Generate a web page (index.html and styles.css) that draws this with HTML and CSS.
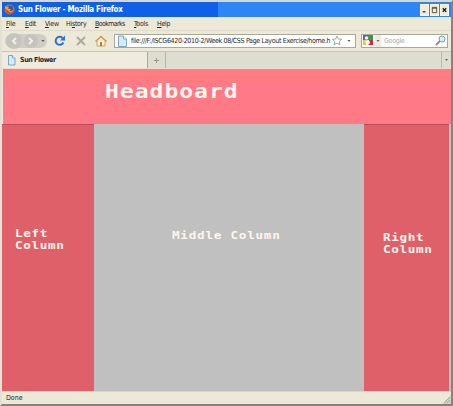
FILE: index.html
```html
<!DOCTYPE html>
<html lang="en">
<head>
<meta charset="utf-8">
<title>Sun Flower</title>
<link rel="stylesheet" href="styles.css">
</head>
<body>
<div class="window">
  <div class="titlebar">
    <svg class="fox" width="11" height="11" viewBox="0 0 11 11"><circle cx="5.5" cy="5.5" r="5" fill="#e66a16"/><circle cx="6" cy="4.5" r="3" fill="#3457a5"/><path d="M1 2l2 1 2-.5-1 2 3 1-2 2 4-1c-1 4-7 4-8-.5z" fill="#f7a32a"/><path d="M.8 4c0 7 8 8 9.500 2-2 3-5 3-6 1z" fill="#d94b13"/></svg>
    <span class="caption">Sun Flower - Mozilla Firefox</span>
    <div class="controls">
      <svg width="8" height="11" viewBox="0 0 8 11"><path d="M2 7.500h3" stroke="#342b28" stroke-width="1.500"/></svg>
      <svg width="8" height="11" viewBox="0 0 8 11"><path d="M1.500 2.500h5v6h-5zM1.500 3.500h5" fill="none" stroke="#54462f"/></svg>
      <svg width="8" height="11" viewBox="0 0 8 11"><path d="M2 3.500l4 4m0-4l-4 4" stroke="#201515" stroke-width="1.500"/></svg>
    </div>
  </div>
  <div class="menu">
    <span class="m-file"><u>F</u>ile</span><span class="m-edit"><u>E</u>dit</span><span class="m-view"><u>V</u>iew</span><span class="m-history">Hi<u>s</u>tory</span><span class="m-book"><u>B</u>ookmarks</span><span class="m-tools"><u>T</u>ools</span><span><u>H</u>elp</span>
  </div>
  <div class="toolbar">
    <svg class="nav" width="118" height="20" viewBox="0 0 118 20">
      <rect x="3" y="3" width="42" height="14" rx="7" fill="#d0cdc5"/>
      <circle cx="12" cy="10" r="8" fill="#c5c4bf"/><circle cx="29" cy="10" r="7" fill="#c5c3bd"/>
      <path d="M14 7l-3 3 3 3M27 7l3 3-3 3" fill="none" stroke="#f0efec" stroke-width="2"/>
      <path d="M39.500 9h3l-1.500 2z" fill="#555"/>
      <path d="M60.500 7a4 4 0 1 0 .8 4.500" fill="none" stroke="#2d70dc" stroke-width="2"/><path d="M63 4.500v5h-5z" fill="#2d70dc"/>
      <path d="M75 6l8 8m0-8l-8 8" stroke="#aaa89d" stroke-width="1.800"/>
      <path d="M95 10v5h8v-5" fill="#fff7de" stroke="#d0a341"/><path d="M93.500 10.500L99 5.500l5.500 5" fill="none" stroke="#d99c35" stroke-width="1.600"/><path d="M98 11h2v4h-2z" fill="#a77b55"/>
    </svg>
    <div class="address">
      <svg width="16" height="14" viewBox="0 0 16 14"><path d="M3.500 2h5l3 3v7.500h-8z" fill="#d5eafa" stroke="#7ba6ca"/><path d="M8.500 2v3h3" fill="#fff" stroke="#7ba6ca"/></svg>
      <span class="url">file:///F:/ISCG6420-2010-2/Week 08/CSS Page Layout Exercise/home.h</span>
      <svg class="star" width="24" height="14" viewBox="0 0 24 14"><path d="M6 2l1.400 3 3.300.3-2.500 2.200.8 3.300-3-1.700-3 1.700.8-3.300-2.500-2.200L4.600 5z" fill="#fff" stroke="#8c9290" stroke-width=".8"/><path d="M16.500 6h3l-1.500 2z" fill="#555"/></svg>
    </div>
    <div class="search">
      <svg width="20" height="14" viewBox="0 0 20 14"><path d="M12.500 0h7v13h-7z" fill="#edebe2"/><path d="M1 1h5v5H1z" fill="#3c69c8"/><path d="M6 1h5v5H6z" fill="#309a50"/><path d="M6 6h5v5H6z" fill="#d32a36"/><path d="M1 6h5v5H1z" fill="#e9c646"/><circle cx="4.500" cy="4" r="1.800" fill="#fff"/><path d="M3 7l4-1 1 3-3 3z" fill="#fff"/><path d="M14.500 6h3L16 8z" fill="#666"/></svg>
      <span>Google</span>
      <svg class="lens" width="12" height="14" viewBox="0 0 12 14"><path d="M5 7l-4 4" stroke="#a6826b" stroke-width="1.800"/><circle cx="7" cy="5" r="3" fill="#d9effc" stroke="#6b9fc7"/></svg>
    </div>
  </div>
  <div class="tabs">
    <div class="tab"><svg width="10" height="12" viewBox="0 0 10 12"><path d="M1.500 1.500h4l2.500 2.500v7H1.500z" fill="#d5eafa" stroke="#7ba6ca"/><path d="M5.500 1.500V4H8" fill="#fff" stroke="#7ba6ca"/></svg><span>Sun Flower</span></div>
    <div class="newtab"><svg width="7" height="7" viewBox="0 0 7 7"><path d="M1 3.500h5M3.500 1v5" stroke="#9b998f"/></svg></div>
    <div class="alltabs"><svg width="5" height="3" viewBox="0 0 5 3"><path d="M1 0h3L2.500 2z" fill="#666"/></svg></div>
  </div>
  <header><span class="wide">Headboard</span></header>
  <main>
    <aside class="left"><span class="wide">Left<br>Column</span></aside>
    <section><span class="wide">Middle Column</span></section>
    <aside class="right"><span class="wide">Right<br>Column</span></aside>
  </main>
  <footer><span>Done</span><svg width="9" height="9" viewBox="0 0 9 9"><path d="M9 0v9H0z" fill="#d4d0c0"/><path d="M8 2L2 8M8 5L5 8" stroke="#aaa797"/></svg></footer>
</div>
</body>
</html>
```
FILE: styles.css
```css
* { box-sizing: border-box; }
body { margin: 0; background: #ece9d8; font: 7px/10px "DejaVu Sans Condensed", "DejaVu Sans", sans-serif; color: #28231f; overflow: hidden; }
svg { flex: none; display: block; }
.window { width: 453px; height: 406px; display: flex; flex-direction: column; border: 2px solid #e2e1d4; border-top-color: #d9d7cb; border-right: 2px solid #85847a; border-bottom: 2px solid #85847a; white-space: nowrap; }
.titlebar { height: 15px; flex: none; display: flex; align-items: center; padding: 0 2px; background: linear-gradient(90deg, #0f60e6 216px, #2e85f7 216px); color: #fff; font-size: 8px; font-weight: bold; }
.caption { margin-left: 3px; letter-spacing: -.3px; }
.controls { margin-left: auto; display: flex; gap: 1px; }
.controls svg { width: 9px; height: 12px; background: #eeebdc; border: 1px solid #f8f5e8; }
.menu { height: 14px; flex: none; display: flex; align-items: center; padding-left: 4px; border-bottom: 1px solid #dedbcc; }
.menu span { letter-spacing: -.3px; }
.menu u { text-underline-offset: 1px; text-decoration-thickness: 1px; }
.menu .m-file { width: 19px; }
.menu .m-edit { width: 20px; }
.menu .m-view { width: 21px; }
.menu .m-history { width: 29px; }
.menu .m-book { width: 39px; letter-spacing: -.6px; }
.menu .m-tools { width: 23px; }
.toolbar { height: 21px; flex: none; display: flex; align-items: center; border-bottom: 1px solid #c9c6b6; }
.nav { margin-right: -6px; }
.address, .search { height: 14px; display: flex; align-items: center; background: #fff; border: 1px solid #a9a797; }
.address { width: 242px; flex: none; }
.url { width: 202px; overflow: hidden; letter-spacing: -.31px; }
.star { margin-left: -1px; }
.search { width: 87px; margin-left: 5px; overflow: hidden; }
.search span { margin-left: 2px; color: #aaa; letter-spacing: -.3px; }
.lens { margin-left: auto; }
.tabs { height: 17px; flex: none; display: flex; background: #deddd1; border-bottom: 1px solid #e8dccc; }
.tab { width: 146px; display: flex; align-items: center; gap: 3px; padding-left: 5px; background: #efecdf; border-right: 1px solid #aaa899; font-weight: bold; letter-spacing: -.4px; }
.newtab { width: 18px; display: flex; align-items: center; justify-content: center; border-right: 1px solid #b9b6a9; }
.alltabs { width: 10px; margin-left: auto; display: flex; align-items: center; justify-content: center; border-left: 1px solid #bebaad; }
header, main { font-family: "DejaVu Sans Mono", "Liberation Mono", monospace; font-weight: bold; color: #fff5ed; }
.wide { display: inline-block; transform: scaleX(1.15); transform-origin: left; }
header { height: 55px; flex: none; margin-left: 1px; padding: 12px 0 0 102px; background: linear-gradient(#ff7d80 12px, #ff7986 12px); font-size: 20px; line-height: 20px; letter-spacing: .87px; }
main { height: 267px; flex: none; display: flex; background: #c0c0c0; font-size: 11px; line-height: 12px; letter-spacing: .57px; }
aside { background: #df6069; border-top: 1px solid #b94b5b; }
.left { width: 92px; padding: 103px 0 0 13px; }
section { flex: 1; padding: 106px 0 0 78px; letter-spacing: .64px; }
.right { width: 85px; margin-right: 2px; padding: 107px 0 0 19px; }
footer { flex: 1; display: flex; align-items: center; justify-content: space-between; padding-left: 4px; border-top: 1px solid #d9d5c5; }
footer svg { align-self: flex-end; }
```
